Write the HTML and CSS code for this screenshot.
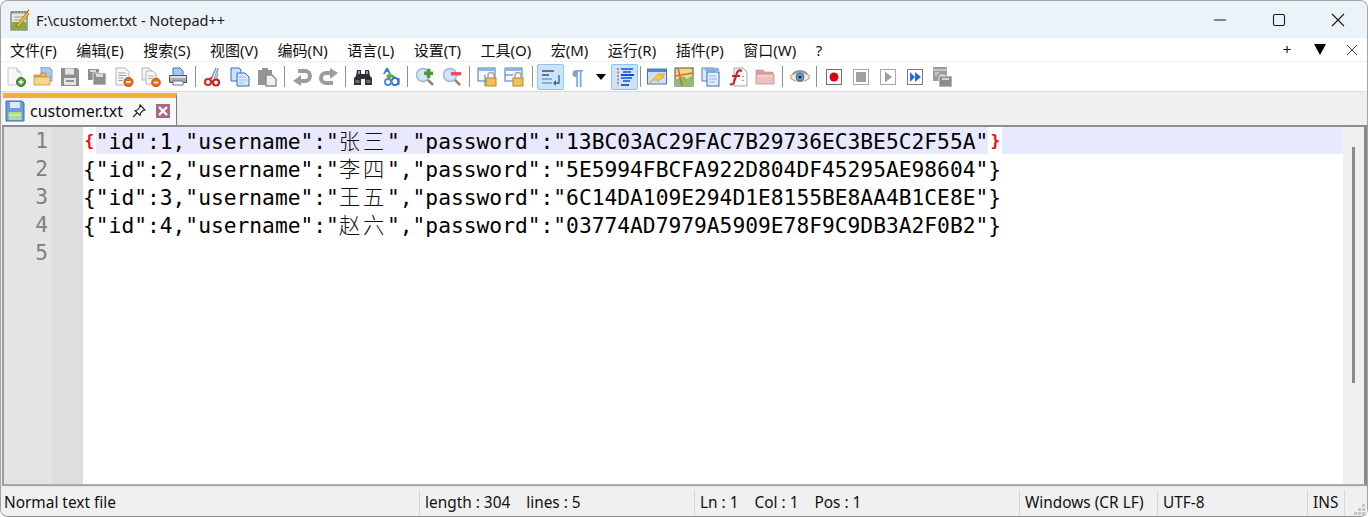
FILE: index.html
```html
<!DOCTYPE html>
<html lang="zh-CN">
<head>
<meta charset="utf-8">
<title>F:\customer.txt - Notepad++</title>
<link rel="stylesheet" href="styles.css">
</head>
<body>
<div class="window">
  <header class="titlebar">
    <svg class="app-icon" viewBox="0 0 20 24" width="20" height="24"><rect x="1" y="4" width="16" height="18" fill="#e4e8d4" stroke="#5f5f52"/><rect x="1.500" y="14" width="15" height="7.500" fill="#7fae3c"/><path d="M3 3v3M6 3v3M9 3v3M12 3v3M15 3v3" stroke="#777"/><path d="M4 9h10M4 12h7" stroke="#a0a0a0"/><path d="M6 18L17 4l2 2L9 19z" fill="#f2b632" stroke="#8a5a10" stroke-width=".6"/><path d="M17 4l1-2.500 1.500 1.500z" fill="#c83c28"/></svg>
    <span class="title-text">F:\customer.txt - Notepad++</span>
    <div class="win-controls">
      <span class="win-btn"><svg viewBox="0 0 14 14" width="14" height="14"><path d="M1 7h12" stroke="#1a1a1a" stroke-width="1.100"/></svg></span>
      <span class="win-btn"><svg viewBox="0 0 14 14" width="14" height="14"><rect x="1.500" y="1.500" width="11" height="11" rx="1.500" fill="none" stroke="#1a1a1a" stroke-width="1.100"/></svg></span>
      <span class="win-btn"><svg viewBox="0 0 14 14" width="14" height="14"><path d="M1 1l12 12M13 1L1 13" stroke="#1a1a1a" stroke-width="1.100"/></svg></span>
    </div>
  </header>

  <nav class="menubar">
    <span class="menu-item">文件(F)</span>
    <span class="menu-item">编辑(E)</span>
    <span class="menu-item">搜索(S)</span>
    <span class="menu-item">视图(V)</span>
    <span class="menu-item">编码(N)</span>
    <span class="menu-item">语言(L)</span>
    <span class="menu-item">设置(T)</span>
    <span class="menu-item">工具(O)</span>
    <span class="menu-item">宏(M)</span>
    <span class="menu-item">运行(R)</span>
    <span class="menu-item">插件(P)</span>
    <span class="menu-item">窗口(W)</span>
    <span class="menu-item">?</span>
    <div class="menu-right">
      <span class="menu-plus">+</span>
      <svg class="menu-down" viewBox="0 0 12 11" width="12" height="11"><path d="M0 0h12L6 11z" fill="#000"/></svg>
      <svg class="menu-x" viewBox="0 0 12 12" width="12" height="12"><path d="M1 1l10 10M11 1L1 11" stroke="#2a4a6a" stroke-width="1"/></svg>
    </div>
  </nav>

  <div class="toolbar">
    <span class="tool"><svg viewBox="0 0 20 20" width="20" height="20"><path d="M2 1h9l4 4v13H2z" fill="#f8f8f8" stroke="#c8c8c8"/><path d="M11 1v4h4" fill="#e8e8e8" stroke="#c8c8c8"/><circle cx="15" cy="15" r="4.500" fill="#4f9a3c" stroke="#2f6f28"/><path d="M15 12.500v5M12.500 15h5" stroke="#fff" stroke-width="1.300"/></svg></span>
    <span class="tool"><svg viewBox="0 0 20 20" width="20" height="20"><path d="M8 0h8l3 3v11H8z" fill="#a8c8ee" stroke="#6d9ad0" stroke-width=".8"/><path d="M1 8h6l1-2h5v4H1z" fill="#e8b860" stroke="#b88838" stroke-width=".8"/><path d="M1 10h16v8H1z" fill="#f6d88a" stroke="#c09440" stroke-width=".8"/></svg></span>
    <span class="tool"><svg viewBox="0 0 20 20" width="20" height="20"><path d="M1 1h16l2 2v16H1z" fill="#8f8f8f"/><rect x="5" y="1.500" width="9" height="6" fill="#e4e4e4"/><rect x="4" y="11" width="12" height="7" fill="#e4e4e4"/><rect x="6" y="13" width="8" height="2" fill="#8f8f8f"/></svg></span>
    <span class="tool"><svg viewBox="0 0 20 20" width="20" height="20"><path d="M1 2h11v11H1z" fill="#8f8f8f"/><rect x="3" y="3" width="6" height="2" fill="#ddd"/><path d="M6 6h13v12H6z" fill="#8f8f8f" stroke="#eee" stroke-width=".8"/><rect x="9" y="7" width="7" height="3" fill="#ddd"/></svg></span>
    <span class="tool"><svg viewBox="0 0 20 20" width="20" height="20"><path d="M2 1h9l4 4v13H2z" fill="#f8f8f8" stroke="#b4b4b4"/><path d="M4.500 6h7M4.500 8.500h8M4.500 11h5M4.500 13.500h4" stroke="#9a9a9a"/><circle cx="14.500" cy="15" r="4.500" fill="#ea6a1e" stroke="#b84a10"/><path d="M12 15h5" stroke="#fff" stroke-width="1.500"/></svg></span>
    <span class="tool"><svg viewBox="0 0 20 20" width="20" height="20"><path d="M1 1h7l3 3v9H1z" fill="#f4f4f4" stroke="#b4b4b4"/><path d="M5 4h7l3 3v10H5z" fill="#f8f8f8" stroke="#b4b4b4"/><path d="M7 9h6M7 11.500h5" stroke="#aaa"/><circle cx="15" cy="15.500" r="4.300" fill="#ea6a1e" stroke="#b84a10"/><path d="M12.700 15.500h4.600" stroke="#fff" stroke-width="1.500"/></svg></span>
    <span class="tool"><svg viewBox="0 0 20 20" width="20" height="20"><path d="M5 1h7l3 3v5H5z" fill="#a4c8f0" stroke="#3a78bc"/><path d="M1.500 8.500h17v7h-17z" fill="#a8acb2" stroke="#50545a"/><path d="M2 9h16v2H2z" fill="#dde0e4"/><path d="M5 14h10v4H5z" fill="#fafafa" stroke="#70747a"/></svg></span>
    <span class="tool-sep"></span>
    <span class="tool"><svg viewBox="0 0 20 20" width="20" height="20"><path d="M13 1L8 12" stroke="#8496aa" stroke-width="1.600"/><path d="M15 1l-1 11-3-1z" fill="#c4d0de" stroke="#7088a4" stroke-width=".7"/><circle cx="5" cy="15" r="3" fill="none" stroke="#c8342a" stroke-width="2.200"/><circle cx="13" cy="15.500" r="3" fill="none" stroke="#b82a22" stroke-width="2.200"/><path d="M6 12.500l3-2" stroke="#c8342a" stroke-width="2"/></svg></span>
    <span class="tool"><svg viewBox="0 0 20 20" width="20" height="20"><path d="M1 1h8l2 2v11H1z" fill="#cfe0f8" stroke="#2f6cc0"/><path d="M7 6h8l4 4v9H7z" fill="#d8e6fa" stroke="#2f6cc0"/><path d="M9 10h6M9 13h7M9 16h5" stroke="#9dbce8"/></svg></span>
    <span class="tool"><svg viewBox="0 0 20 20" width="20" height="20"><path d="M1 3h4V1h6v2h4v5H9v10H1z" fill="#949494"/><path d="M9 8h6l4 4v7H9z" fill="#f0f0f0" stroke="#8a8a8a" stroke-width="1.400"/></svg></span>
    <span class="tool-sep"></span>
    <span class="tool"><svg viewBox="0 0 20 20" width="20" height="20"><path d="M6 4h7a5 5 0 0 1 0 10H8" fill="none" stroke="#9c9c9c" stroke-width="4"/><path d="M9 8L1 14l8 5z" fill="#9c9c9c"/></svg></span>
    <span class="tool"><svg viewBox="0 0 20 20" width="20" height="20"><g transform="rotate(180 10 10)"><path d="M6 4h7a5 5 0 0 1 0 10H8" fill="none" stroke="#9c9c9c" stroke-width="4"/><path d="M9 8L1 14l8 5z" fill="#9c9c9c"/></g></svg></span>
    <span class="tool-sep tool-sep-narrow"></span>
    <span class="tool"><svg viewBox="0 0 20 20" width="20" height="20"><path d="M4 3h4v4h4V3h4l1 6 2 2v7h-7v-6H8v6H1v-7l2-2z" fill="#2e3238"/><path d="M5 4h2v3H5zM13 4h2v3h-2z" fill="#9aa0a8"/><path d="M2.500 13h4v3h-4zM13.500 13h4v3h-4z" fill="#6a7078"/></svg></span>
    <span class="tool"><svg viewBox="0 0 20 20" width="20" height="20"><path d="M3 7l3-6 2 0 3 6h-2l-1-2H6L5 7z" fill="#2f88cc"/><circle cx="15" cy="14.500" r="3.500" fill="none" stroke="#2f78c8" stroke-width="2"/><circle cx="8" cy="15" r="3" fill="none" stroke="#4a90d8" stroke-width="2"/><circle cx="9" cy="9.500" r="2.500" fill="#6aa84a"/><path d="M11 8l4 3" stroke="#3f8f3a" stroke-width="2"/><path d="M18.500 11v7" stroke="#2f78c8" stroke-width="2"/></svg></span>
    <span class="tool-sep"></span>
    <span class="tool"><svg viewBox="0 0 20 20" width="20" height="20"><circle cx="8" cy="8" r="6.500" fill="#d4e4f8" stroke="#9db8d8" stroke-width="1.500"/><path d="M13 13l5 5" stroke="#a08068" stroke-width="2.500"/><path d="M12 3h4v3h3v4h-3v3h-4v-3H9V6h3z" fill="#4c9a3c" transform="translate(1 -1) scale(.9)"/></svg></span>
    <span class="tool"><svg viewBox="0 0 20 20" width="20" height="20"><circle cx="8" cy="8" r="6.500" fill="#d4e4f8" stroke="#9db8d8" stroke-width="1.500"/><path d="M13 13l5 5" stroke="#a08068" stroke-width="2.500"/><rect x="9" y="5" width="10" height="3.500" fill="#e85060"/></svg></span>
    <span class="tool-sep"></span>
    <span class="tool"><svg viewBox="0 0 20 20" width="20" height="20"><rect x="1" y="1" width="17" height="13" fill="#f4f8fd" stroke="#3f78b8"/><path d="M1 1h17v3H1z" fill="#8fb4e0"/><path d="M8 8v11" stroke="#3f78b8"/><rect x="9" y="11" width="10" height="8" fill="#f0c050" stroke="#b88820"/><path d="M11 11V8.500a3 3 0 0 1 6 0V11" fill="none" stroke="#a8a8a8" stroke-width="1.500"/></svg></span>
    <span class="tool"><svg viewBox="0 0 20 20" width="20" height="20"><rect x="1" y="1" width="17" height="13" fill="#f4f8fd" stroke="#3f78b8"/><path d="M1 1h17v3H1z" fill="#8fb4e0"/><path d="M1 8h8" stroke="#3f78b8"/><rect x="9" y="11" width="10" height="8" fill="#f0c050" stroke="#b88820"/><path d="M11 11V8.500a3 3 0 0 1 6 0V11" fill="none" stroke="#a8a8a8" stroke-width="1.500"/></svg></span>
    <span class="tool-sep tool-sep-wide"></span>
    <span class="tool tool-on"><svg viewBox="0 0 20 20" width="20" height="20"><path d="M1 4h12M1 8h7" stroke="#4a4f58" stroke-width="1.600"/><path d="M1 12h10M1 16h10" stroke="#6f9cc8" stroke-width="1.600"/><path d="M18 8v8h-5" fill="none" stroke="#2f6ca8" stroke-width="1.400"/><path d="M15 13l-3 3 3 3z" fill="#2f6ca8"/></svg></span>
    <span class="tool tool-pilcrow">¶</span>
    <span class="tool-drop"><svg viewBox="0 0 10 6" width="10" height="6"><path d="M0 0h10L5 6z" fill="#000"/></svg></span>
    <span class="tool tool-on"><svg viewBox="0 0 20 20" width="20" height="20"><path d="M3 1v18" stroke="#c84848" stroke-width="1.200" stroke-dasharray="2 1.500"/><path d="M6 2h12M8 5h8M6 11h11M8 14h7" stroke="#1450d8" stroke-width="1.600"/><path d="M6 8h13" stroke="#1450d8" stroke-width="2"/><path d="M6 18h8" stroke="#2a2a7a" stroke-width="1.400"/></svg></span>
    <span class="tool-sep tool-sep-tight"></span>
    <span class="tool"><svg viewBox="0 0 20 20" width="20" height="20"><rect x="0.500" y="2" width="19" height="15" fill="#cfe0f4" stroke="#3f78b8"/><path d="M1 2h18v3H1z" fill="#4a88cc"/><path d="M5 13l6-6h7l-4 3h3l-7 5 1-2H6l-4 4z" fill="#f6c83c" stroke="#d89818" stroke-width=".6"/></svg></span>
    <span class="tool"><svg viewBox="0 0 20 20" width="20" height="20"><rect x="1" y="1" width="18" height="18" fill="#e8e080" stroke="#50503c"/><path d="M1 13l8-4 4 3 6-4v11H1z" fill="#88c070"/><path d="M4 1l4 18M1 9l18-3" stroke="#e06050" stroke-width="1.600"/><path d="M10 10l4 9" stroke="#d8a040" stroke-width="1.500"/></svg></span>
    <span class="tool"><svg viewBox="0 0 20 20" width="20" height="20"><rect x="1" y="1" width="12" height="13" fill="#dbe8f8" stroke="#4a80c0"/><rect x="4" y="1" width="14" height="3" fill="#8cb0dc"/><rect x="6" y="5" width="12" height="14" fill="#e4eefa" stroke="#2f6cc0"/><path d="M8 9h7M8 12h8M8 15h6" stroke="#8fb4e4"/></svg></span>
    <span class="tool"><svg viewBox="0 0 20 20" width="20" height="20"><path d="M6 1h9l4 4v14H6z" fill="#fbfbfb" stroke="#a4a4a4"/><path d="M14 4c-4-2-5 1-6 5l-2 6c-.5 2-2 3-4 2" fill="none" stroke="#c82828" stroke-width="2.200"/><path d="M4 9h8" stroke="#c82828" stroke-width="2"/><path d="M15 9v1M15 13v1" stroke="#555"/></svg></span>
    <span class="tool"><svg viewBox="0 0 20 20" width="20" height="20"><path d="M1 3h7l2 2h8v3H1z" fill="#dca0a0" stroke="#c89090" stroke-width=".6"/><path d="M1 7h18v10H1z" fill="#eec0c0" stroke="#c89090" stroke-width=".8"/><path d="M3 9h14" stroke="#f8e0e0"/></svg></span>
    <span class="tool-sep"></span>
    <span class="tool"><svg viewBox="0 0 20 20" width="20" height="20"><path d="M0 10c4-6 16-6 20 0-4 6-16 6-20 0z" fill="#eef0e8" stroke="#c0a078" stroke-width="1.200"/><path d="M3 7c4-4 10-4 14 0" fill="none" stroke="#8a98a8" stroke-width="1.800"/><circle cx="10" cy="10" r="4" fill="#6e9cc8" stroke="#4a6c90"/><circle cx="10" cy="10" r="1.600" fill="#1c2c44"/></svg></span>
    <span class="tool-sep tool-sep-narrow"></span>
    <span class="tool"><svg viewBox="0 0 20 20" width="20" height="20"><rect x="2.500" y="2.500" width="15" height="15" fill="#fff" stroke="#6e6e6e"/><circle cx="10" cy="10" r="4.500" fill="#e00010"/></svg></span>
    <span class="tool"><svg viewBox="0 0 20 20" width="20" height="20"><rect x="2.500" y="2.500" width="15" height="15" fill="#fff" stroke="#a8a8a8"/><rect x="5" y="5" width="10" height="10" fill="#a0a0a0"/></svg></span>
    <span class="tool"><svg viewBox="0 0 20 20" width="20" height="20"><rect x="2.500" y="2.500" width="15" height="15" fill="#fff" stroke="#a8a8a8"/><path d="M7 4.500v11l7-5.500z" fill="#a0a0a0"/></svg></span>
    <span class="tool"><svg viewBox="0 0 20 20" width="20" height="20"><rect x="2.500" y="2.500" width="15" height="15" fill="#fff" stroke="#7a7a7a"/><path d="M5 5v10l5-5zM10 5v10l6-5z" fill="#2c6ed8"/></svg></span>
    <span class="tool"><svg viewBox="0 0 20 20" width="20" height="20"><path d="M1 0h14v14H1z" fill="#9c9c9c"/><path d="M1 3h14" stroke="#eee"/><path d="M3 6h4M3 8h2M8 8h5" stroke="#eee"/><path d="M7 9h13v11H7z" fill="#8c8c8c" stroke="#eee" stroke-width=".8"/><path d="M10 12h7" stroke="#eee" stroke-width="1.500"/></svg></span>
  </div>

  <div class="tabbar">
    <div class="tab">
      <svg class="tab-save" viewBox="0 0 20 22" width="20" height="22"><path d="M1 1h16l2 2v18H1z" fill="#6a9ce0" stroke="#3f6cb8"/><rect x="5" y="2" width="10" height="6" fill="#dce8f8"/><rect x="3.500" y="12" width="13" height="8" fill="#b0dc88"/><path d="M3.500 15h13" stroke="#e8f4d8"/></svg>
      <span class="tab-name">customer.txt</span>
      <svg class="tab-pin" viewBox="0 0 14 14" width="14" height="14"><path d="M8 1l5 5-2 .5-2.500 2.500-.5 2.500L3 6.500 5.500 6 7.500 3.500z" fill="none" stroke="#222" stroke-width="1.100"/><path d="M5 9l-4 4" stroke="#222" stroke-width="1.100"/></svg>
      <svg class="tab-close" viewBox="0 0 14 14" width="14" height="14"><rect width="14" height="14" fill="#a5688a"/><path d="M3 3l8 8M11 3l-8 8" stroke="#fff" stroke-width="2.400"/></svg>
    </div>
  </div>

  <main class="editor">
    <div class="gutter">
      <div class="ln">1</div>
      <div class="ln">2</div>
      <div class="ln">3</div>
      <div class="ln">4</div>
      <div class="ln">5</div>
    </div>
    <div class="fold"></div>
    <div class="code">
      <div class="line line-current"><span class="brace">{</span><span class="sel">"id":1,"username":"<span class="cjk">张三</span>","password":"13BC03AC29FAC7B29736EC3BE5C2F55A"</span><span class="brace">}</span></div>
      <div class="line">{"id":2,"username":"<span class="cjk">李四</span>","password":"5E5994FBCFA922D804DF45295AE98604"}</div>
      <div class="line">{"id":3,"username":"<span class="cjk">王五</span>","password":"6C14DA109E294D1E8155BE8AA4B1CE8E"}</div>
      <div class="line">{"id":4,"username":"<span class="cjk">赵六</span>","password":"03774AD7979A5909E78F9C9DB3A2F0B2"}</div>
      <div class="line"></div>
    </div>
    <div class="scrollbar"><div class="thumb"></div></div>
  </main>

  <footer class="statusbar">
    <span class="cell">Normal text file</span>
    <span class="cell">length : 304&nbsp;&nbsp;&nbsp;&nbsp;lines : 5</span>
    <span class="cell">Ln : 1&nbsp;&nbsp;&nbsp;&nbsp;Col : 1&nbsp;&nbsp;&nbsp;&nbsp;Pos : 1</span>
    <span class="cell">Windows (CR LF)</span>
    <span class="cell">UTF-8</span>
    <span class="cell">INS</span>
    <span class="cell cell-grip"><svg viewBox="0 0 12 12" width="12" height="12"><path d="M8 0h3v3H8zM4 4h3v3H4zM8 4h3v3H8zM0 8h3v3H0zM4 8h3v3H4zM8 8h3v3H8z" fill="#c4c4c4"/></svg></span>
  </footer>
</div>
</body>
</html>
```

FILE: styles.css
```css
* { box-sizing: border-box; }
html, body { margin: 0; padding: 0; height: 100%; background: #ffffff; overflow: hidden; }
body { font-family: "Noto Sans", "Noto Sans CJK SC", sans-serif; color: #111; }

.window {
  width: 1368px;
  height: 517px;
  display: flex;
  flex-direction: column;
  border: 1px solid #a4a4a4;
  border-bottom-color: #8e8e8e;
  border-radius: 8px;
  overflow: hidden;
  background: #f0f0f0;
}

.titlebar {
  height: 37px;
  flex: none;
  display: flex;
  align-items: center;
  background: #ebf3f9;
  padding-left: 9px;
}
.app-icon { flex: none; margin-right: 6px; }
.title-text { font-size: 14.5px; color: #1a1a1a; }
.win-controls { margin-left: auto; display: flex; }
.win-btn { width: 59px; height: 37px; display: flex; align-items: center; justify-content: center; }

.menubar {
  height: 23px;
  flex: none;
  display: flex;
  align-items: center;
  gap: 19.500px;
  background: #ffffff;
  padding-left: 9px;
  font-size: 15px;
}
.menu-item { white-space: nowrap; color: #111; }
.menu-right { margin-left: auto; display: flex; align-items: center; padding-right: 9px; }
.menu-plus { font-size: 15px; line-height: 1; width: 12px; text-align: center; margin-right: 21px; }
.menu-down { margin-right: 20px; }

.toolbar {
  height: 30px;
  flex: none;
  margin-top: 1px;
  display: flex;
  align-items: center;
  padding-left: 1px;
  background: #ffffff;
  border-bottom: 1px solid #dcdcdc;
}
.tool { width: 27px; height: 26px; flex: none; display: flex; align-items: center; justify-content: center; }
.tool-on { background: #cce4f9; border: 1px solid #90c4f0; border-radius: 2px; }
.tool-pilcrow { font-family: "Liberation Sans", sans-serif; font-size: 21px; font-weight: 700; color: #7ea6cc; }
.tool-sep { width: 8px; height: 21px; flex: none; display: flex; justify-content: center; }
.tool-sep::before { content: ""; width: 1px; height: 100%; background: #8f8f8f; }
.tool-sep-narrow { width: 7px; }
.tool-sep-wide { width: 10px; }
.tool-sep-tight { width: 5px; }
.tool-drop { width: 20px; height: 26px; flex: none; display: flex; align-items: center; justify-content: center; }

.tabbar {
  height: 33px;
  flex: none;
  padding-left: 2px;
  background: #f0f0f0;
  display: flex;
  align-items: stretch;
  padding-top: 1px;
}
.tab {
  width: 174px;
  display: flex;
  align-items: center;
  background: #f8f8f8;
  border-top: 5px solid #ffa83c;
  border-right: 1px solid #7a7a7a;
  padding: 0 0 2px 2px;
}
.tab-save { flex: none; }
.tab-name { font-size: 16px; margin-left: 5px; color: #111; width: 102px; }
.tab-pin { flex: none; }
.tab-close { flex: none; margin-left: 10px; }

.editor {
  flex: 1;
  min-height: 0;
  display: flex;
  margin-left: 1px;
  border-top: 2px solid #8d8d8d;
  border-left: 2px solid #9a9a9a;
  border-right: 3px solid #8a8a8a;
  border-bottom: 2px solid #a8a8a8;
  background: #ffffff;
}
.gutter { width: 48px; flex: none; background: #e4e4e4; }
.ln {
  height: 28px;
  text-align: right;
  padding-right: 4px;
  font: 21.2px/28px "DejaVu Sans Mono", monospace;
  color: #808080;
}
.fold { width: 31px; flex: none; background: #dedede; }
.code { flex: 1; min-width: 0; }
.line {
  height: 28px;
  font: 21.25px/25px "DejaVu Sans Mono", "Noto Sans CJK SC", monospace;
  color: #000;
  white-space: pre;
}
.line-current { background: linear-gradient(#e8e8ff, #e8e8ff) no-repeat 0 0 / 100% 27px; display: flex; }
.brace {
  flex: none;
  width: 12.790px;
  height: 27px;
  background: #fff;
  color: #f00;
  font-size: 16px;
  font-weight: 700;
  text-align: center;
  padding-top: 1px;
}
.line-current .brace:last-child { width: 14px; }
.sel { background: #e8e8ff; height: 27px; }
.cjk { font-family: "Noto Sans CJK SC", sans-serif; font-weight: 300; letter-spacing: 2.800px; color: #111; }

.scrollbar { width: 21px; flex: none; background: #f0f0f0; padding-top: 20px; display: flex; justify-content: center; }
.thumb { width: 3px; height: 236px; background: #8a8a8a; }

.statusbar {
  height: 30px;
  flex: none;
  display: grid;
  grid-template-columns: 419px 275px 325px 138px 150px 37px 1fr;
  align-items: end;
  background: #f0f0f0;
  font-size: 15.4px;
  border-top: 1px solid #e4e4e4;
}
.cell {
  height: 26px;
  line-height: 26px;
  padding-left: 5px;
  border-right: 1px solid #d8d8d8;
  white-space: nowrap;
  color: #111;
}
.cell:first-child { padding-left: 3px; }
.cell-grip { border-right: 0; display: flex; align-items: flex-end; justify-content: flex-end; padding: 0 1px 0 0; }
```
